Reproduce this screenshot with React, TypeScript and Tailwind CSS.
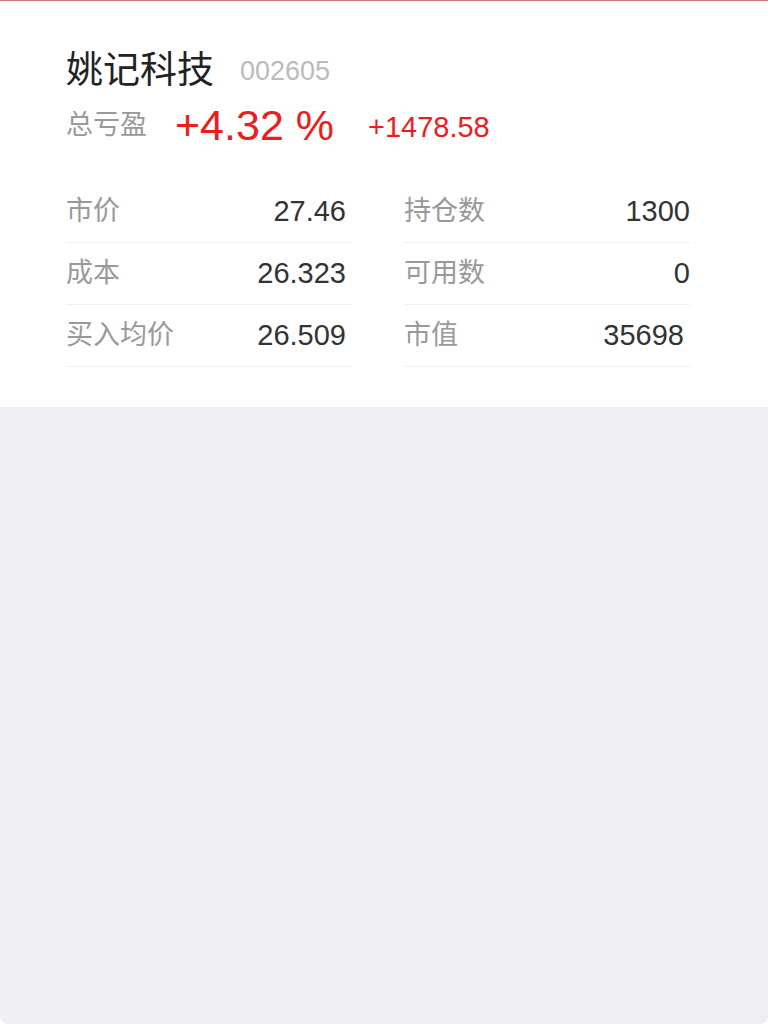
const rows = [
  { l: '市价', lv: '27.46', r: '持仓数', rv: '1300' },
  { l: '成本', lv: '26.323', r: '可用数', rv: '0' },
  { l: '买入均价', lv: '26.509', r: '市值', rv: '35698' },
];

export default function App() {
  return (
    <div
      className="w-[770px] h-[1024px] bg-white"
      style={{ fontFamily: '"Liberation Sans", "Noto Sans CJK SC", sans-serif' }}
    >
      <div className="w-[768px] h-[1024px] flex flex-col border-t border-[#c97373] rounded-b-[8px] overflow-hidden bg-[#efeef3]">
        <div className="bg-white h-[406px] pl-[66px] pt-[45px]">
          <div className="flex items-center h-[48px]">
            <span className="text-[37px] leading-none text-[#222]">姚记科技</span>
            <span className="ml-[26px] text-[27px] leading-none text-[#bbb] mt-[2px]">002605</span>
          </div>
          <div className="flex items-center h-[54px] mt-[4px]">
            <span className="text-[27px] leading-none text-[#999]">总亏盈</span>
            <span className="ml-[28px] text-[43px] leading-none text-[#f21b1b]">+4.32 %</span>
            <span className="ml-[34px] text-[29px] leading-none text-[#f21b1b] mt-[4px]">+1478.58</span>
          </div>
          <div className="flex gap-[52px] mt-[29px]">
            {[0, 1].map((c) => (
              <div key={c} className="w-[286px] flex flex-col">
                {rows.map((row, i) => (
                  <div
                    key={i}
                    className="h-[62px] flex items-center justify-between border-b border-[#f0f0f0]"
                  >
                    <span className="text-[27px] text-[#999]">{c === 0 ? row.l : row.r}</span>
                    <span
                      className={`text-[29px] text-[#333] ${c === 0 || i === 2 ? 'pr-[6px]' : ''}`}
                    >
                      {c === 0 ? row.lv : row.rv}
                    </span>
                  </div>
                ))}
              </div>
            ))}
          </div>
        </div>
      </div>
    </div>
  );
}
